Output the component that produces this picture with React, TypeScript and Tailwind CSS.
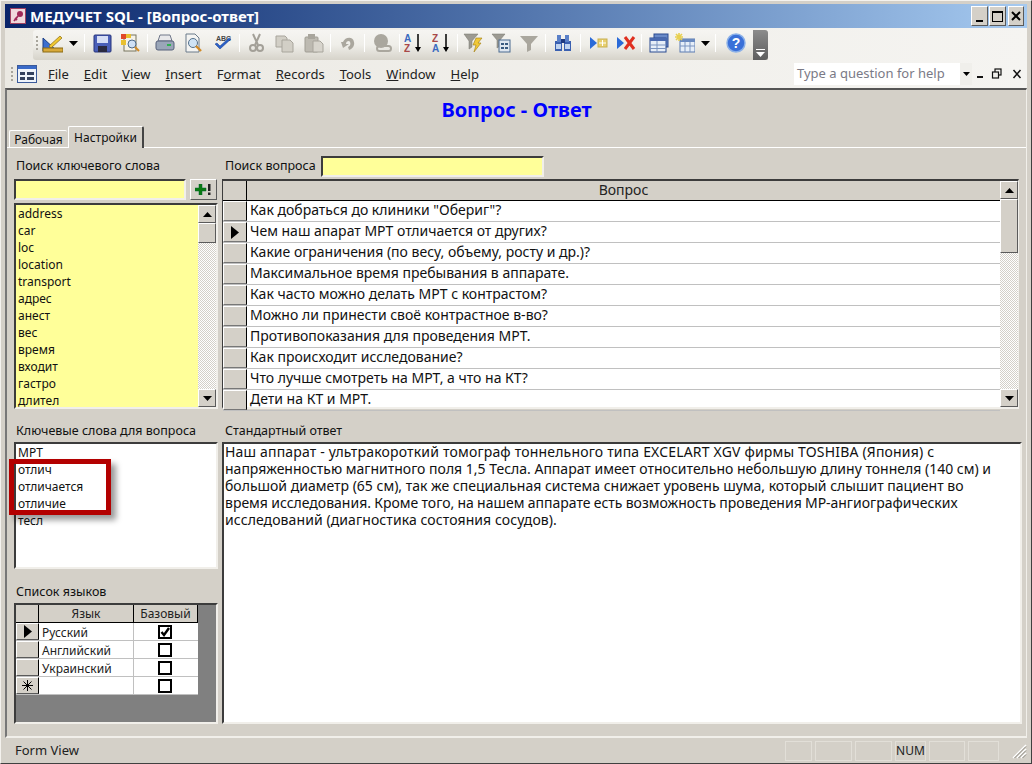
import React from "react";

const sunken = "border-2 border-t-[#3c3c3c] border-l-[#3c3c3c] border-b-[#f1efea] border-r-[#f1efea]";
const raised = "border border-t-[#ffffff] border-l-[#ffffff] border-b-[#5a5a5a] border-r-[#5a5a5a] bg-[#d4d0c8]";

const I = ({ children, w = 20, cls = "" }: { children: React.ReactNode; w?: number; cls?: string }) => (
  <svg width={w} height={20} viewBox={`0 0 ${w} 20`} className={`shrink-0 ${cls}`}>{children}</svg>
);

const Sep = ({ cls }: { cls: string }) => <div className={`w-px h-[18px] bg-[#b8b5ac] border-r border-white shrink-0 ${cls}`} />;
const Arrow = ({ cls = "" }: { cls?: string }) => (
  <svg width={9} height={5} viewBox="0 0 9 5" className={`shrink-0 ${cls}`}><path d="M0 0h9L4.5 5z" fill="#000" /></svg>
);
const Grip = ({ h = 4 }: { h?: number }) => (
  <div className="flex flex-col gap-[2px] w-[3px] shrink-0">
    {Array.from({ length: h }).map((_, i) => <div key={i} className="w-[2px] h-[2px] bg-[#a8a59c]" />)}
  </div>
);

function Toolbar() {
  return (
    <div className="h-[32px] shrink-0 flex items-end bg-gradient-to-r from-[#ebe9e3] to-[#f5f4f1]">
      <div className="ml-[28px] w-[735px] h-[30px] pb-[4px] rounded-l-[3px] flex items-center bg-gradient-to-b from-[#f6f5f2] via-[#efeee9] to-[#d6d3ca] relative">
        <div className="ml-[3px]"><Grip /></div>
        <I w={21} cls="ml-[3px]">
          <path d="M1 18V5l14 13z" fill="#3c6fd0" stroke="#1c3f86" />
          <rect x="1" y="15" width="20" height="4" fill="#d8a93a" stroke="#8a6a14" />
          <path d="M7 13 18 3l2 2L9 15z" fill="#f0c830" stroke="#8a6a14" strokeWidth=".7" />
        </I>
        <Arrow cls="ml-[6px]" />
        <Sep cls="ml-[6px]" />
        <I w={19} cls="ml-[8px]">
          <rect x="1" y="2" width="17" height="17" rx="1" fill="#4a5fb8" stroke="#26357c" />
          <rect x="4" y="3" width="11" height="7" fill="#d6def5" />
          <rect x="5" y="13" width="9" height="6" fill="#2a2a40" />
        </I>
        <I w={21} cls="ml-[8px]">
          <rect x="4" y="2" width="12" height="16" fill="#f5f2e8" stroke="#77755e" />
          <rect x="1" y="1" width="5" height="5" fill="#e04828" /><rect x="6" y="1" width="5" height="4" fill="#e8c030" />
          <rect x="1" y="7" width="5" height="5" fill="#e8c030" />
          <circle cx="12" cy="11" r="4" fill="#cfe0f5" stroke="#4d6a8a" />
          <path d="m15 14 4 4" stroke="#d08a28" strokeWidth="2" />
        </I>
        <Sep cls="ml-[6px]" />
        <I cls="ml-[7px]">
          <path d="M5 2h10l2 6H3z" fill="#e8e8ea" stroke="#70788a" />
          <rect x="1" y="8" width="18" height="9" rx="2" fill="#9aa6b8" stroke="#56607a" />
          <rect x="12" y="11" width="4" height="2" fill="#30b050" />
        </I>
        <I cls="ml-[9px]">
          <path d="M2 1h9l4 4v14H2z" fill="#f4f4f2" stroke="#6a7a8a" />
          <circle cx="9" cy="10" r="4.5" fill="#cfe3f5" stroke="#55708a" />
          <path d="m12 13 5 5" stroke="#d08a28" strokeWidth="2.4" />
        </I>
        <I cls="ml-[9px]">
          <text x="3" y="8" fontSize="7" fontWeight="700" fontFamily="Liberation Sans" fill="#444">ABC</text>
          <path d="m2 11 5 5 11-10-2-1-9 8-3-3z" fill="#2a60c8" stroke="#1a3c8a" strokeWidth=".5" />
        </I>
        <Sep cls="ml-[6px]" />
        <I w={15} cls="ml-[9px]">
          <path d="m4 1 5 11M11 1 6 12" stroke="#a3a098" strokeWidth="2" />
          <circle cx="4" cy="15" r="3" fill="none" stroke="#a3a098" strokeWidth="2" />
          <circle cx="11" cy="15" r="3" fill="none" stroke="#a3a098" strokeWidth="2" />
        </I>
        <I cls="ml-[11px]">
          <path d="M1 3h9l2 2v9H1z" fill="#d2cfc6" stroke="#a8a59c" />
          <path d="M7 7h8l3 3v9H7z" fill="#d2cfc6" stroke="#a8a59c" />
        </I>
        <I cls="ml-[9px]">
          <rect x="1" y="4" width="13" height="15" rx="1" fill="#bdbab1" stroke="#a09d94" />
          <rect x="4" y="1" width="7" height="5" fill="#a8a59c" />
          <path d="M9 8h7l3 3v8H9z" fill="#d8d5cd" stroke="#a8a59c" />
        </I>
        <Sep cls="ml-[6px]" />
        <I w={16} cls="ml-[9px]">
          <path d="M3 9c2-5 10-6 11 0 1 4-2 7-5 8l-1-3c3-1 3-5 1-6-2 0-3 1-3 3l3 0-6 4-2-6z" fill="#aaa79e" />
        </I>
        <Sep cls="ml-[8px]" />
        <I cls="ml-[7px]">
          <circle cx="9" cy="8" r="7" fill="#aaa79e" />
          <rect x="5" y="13" width="14" height="5" rx="2.5" fill="none" stroke="#aaa79e" strokeWidth="2" />
        </I>
        <Sep cls="ml-[7px]" />
        <I cls="ml-[4px]">
          <text x="0" y="9" fontSize="10" fontWeight="700" fontFamily="Liberation Sans" fill="#3a6ac0">A</text>
          <text x="0" y="19" fontSize="10" fontWeight="700" fontFamily="Liberation Sans" fill="#a84848">Z</text>
          <path d="M14 1v15" stroke="#000" strokeWidth="1.5" /><path d="m11 14 3 5 3-5z" fill="#000" />
        </I>
        <I cls="ml-[8px]">
          <text x="0" y="9" fontSize="10" fontWeight="700" fontFamily="Liberation Sans" fill="#a84848">Z</text>
          <text x="0" y="19" fontSize="10" fontWeight="700" fontFamily="Liberation Sans" fill="#3a6ac0">A</text>
          <path d="M14 1v15" stroke="#000" strokeWidth="1.5" /><path d="m11 14 3 5 3-5z" fill="#000" />
        </I>
        <Sep cls="ml-[5px]" />
        <I cls="ml-[5px]">
          <path d="M1 1h14L9 8v6l-3 2V8z" fill="#9c9a92" stroke="#77756d" strokeWidth=".5" />
          <path d="m13 5 6 0-4 5h3l-7 9 2-7h-3z" fill="#f0c838" stroke="#a07c10" strokeWidth=".6" />
        </I>
        <I cls="ml-[8px]">
          <path d="M1 1h13L9 7v6l-3 2V7z" fill="#9c9a92" stroke="#77756d" strokeWidth=".5" />
          <rect x="8" y="7" width="11" height="12" fill="#dfe6ef" stroke="#4a6a90" />
          <rect x="10" y="10" width="3" height="2" fill="#3a5a80" /><rect x="14" y="10" width="3" height="2" fill="#3a5a80" />
          <rect x="10" y="14" width="3" height="2" fill="#3a5a80" /><rect x="14" y="14" width="3" height="2" fill="#3a5a80" />
        </I>
        <I cls="ml-[8px]">
          <path d="M1 3h18l-7 8v6l-4 2v-8z" fill="#aaa79e" />
        </I>
        <Sep cls="ml-[6px]" />
        <I cls="ml-[7px]">
          <rect x="2" y="8" width="7" height="10" fill="#3a60b0" /><rect x="11" y="8" width="7" height="10" fill="#3a60b0" />
          <rect x="4" y="2" width="4" height="7" fill="#5a80c8" /><rect x="12" y="2" width="4" height="7" fill="#5a80c8" />
          <rect x="8" y="6" width="4" height="4" fill="#1f3a80" />
          <rect x="3" y="11" width="5" height="5" fill="#c0d4f0" /><rect x="12" y="11" width="5" height="5" fill="#c0d4f0" />
        </I>
        <Sep cls="ml-[7px]" />
        <I cls="ml-[8px]">
          <path d="M1 4v12l7-6z" fill="#2a6ad8" />
          <rect x="9" y="6" width="9" height="8" fill="#e8d070" stroke="#c8b050" />
          <path d="M13.500 7v6M10 10h7" stroke="#fff" />
        </I>
        <I cls="ml-[7px]">
          <path d="M1 4v12l7-6z" fill="#2a6ad8" />
          <path d="m9 4 9 12M18 4 9 16" stroke="#e03020" strokeWidth="3" />
        </I>
        <Sep cls="ml-[5px]" />
        <I cls="ml-[7px]">
          <rect x="5" y="1" width="14" height="13" fill="#6a8ac8" stroke="#2a4a90" />
          <rect x="1" y="5" width="16" height="14" fill="#e6eef8" stroke="#2a4a90" />
          <rect x="1" y="5" width="16" height="3" fill="#4a6ab0" />
          <path d="M8 8v11M1 12h16M1 15.500h16" stroke="#7a94c0" />
        </I>
        <I cls="ml-[6px]">
          <rect x="5" y="6" width="15" height="13" fill="#e6eef8" stroke="#5a7ab0" />
          <rect x="5" y="6" width="15" height="3" fill="#6a8ac0" />
          <path d="M10 9v10M15 9v10M5 13h15" stroke="#7a94c0" />
          <path d="M4 0v8M0 4h8M1 1l6 6M7 1 1 7" stroke="#e8d050" strokeWidth="1.6" />
        </I>
        <Arrow cls="ml-[6px]" />
        <Sep cls="ml-[5px]" />
        <I cls="ml-[10px]">
          <circle cx="10" cy="10" r="9" fill="#3a70d8" stroke="#8ab0e8" strokeWidth="1.5" />
          <text x="10" y="15" textAnchor="middle" fontSize="14" fontWeight="700" fontFamily="Liberation Sans" fill="#fff">?</text>
        </I>
        <div className="absolute right-0 top-0 w-[15px] h-[30px] rounded-r-[3px] bg-gradient-to-b from-[#8c8c8c] to-[#5e5e5e] flex flex-col items-center justify-end pb-[3px]">
          <div className="w-[9px] h-px bg-white mb-[2px]" />
          <svg width={9} height={5} viewBox="0 0 9 5"><path d="M0 0h9L4.500 5z" fill="#fff" /></svg>
        </div>
      </div>
    </div>
  );
}

function MenuBar() {
  const items: [string, string, string][] = [
    ["", "F", "ile"], ["", "E", "dit"], ["", "V", "iew"], ["", "I", "nsert"],
    ["F", "o", "rmat"], ["", "R", "ecords"], ["", "T", "ools"], ["", "W", "indow"], ["", "H", "elp"],
  ];
  return (
    <div className="h-[28px] shrink-0 flex items-center bg-gradient-to-r from-[#ebe9e3] to-[#f5f4f1] text-[13px] text-[#222] font-['Noto_Sans','Liberation_Sans',sans-serif]">
      <div className="ml-[6px]"><Grip /></div>
      <svg width={20} height={18} viewBox="0 0 20 18" className="ml-[3px] shrink-0">
        <rect x=".5" y=".5" width="19" height="17" fill="#eef3fa" stroke="#3a5a9a" />
        <rect x="1" y="1" width="18" height="3" fill="#3a6ac8" />
        <rect x="3" y="7" width="5" height="3" fill="#33415e" /><rect x="10" y="7" width="7" height="3" fill="#33415e" />
        <rect x="3" y="12" width="5" height="3" fill="#33415e" /><rect x="10" y="12" width="7" height="3" fill="#33415e" />
      </svg>
      <div className="flex ml-[11px] gap-[15px] leading-[18px]">
        {items.map(([a, u, b], i) => (
          <span key={i}>{a}<span className="underline">{u}</span>{b}</span>
        ))}
      </div>
      <div className="ml-auto flex items-center">
        <div className="w-[166px] h-[22px] bg-white text-[#7a7a86] flex items-center pl-[3px] pb-[1px] whitespace-nowrap">Type a question for help</div>
        <div className="w-[12px] h-[22px] bg-[#f0efeb] flex items-center justify-center"><svg width={7} height={4} viewBox="0 0 7 4"><path d="M0 0h7L3.500 4z" fill="#000" /></svg></div>
        <svg width={55} height={14} viewBox="0 0 55 14" className="shrink-0">
          <rect x="5" y="9" width="6" height="2" fill="#111" />
          <rect x="23" y="2" width="6" height="6" fill="none" stroke="#111" strokeWidth="1.200" />
          <rect x="20.500" y="5" width="6" height="6" fill="#f0efeb" stroke="#111" strokeWidth="1.200" />
          <path d="m41.500 3 7 8M48.500 3l-7 8" stroke="#111" strokeWidth="1.500" />
        </svg>
      </div>
    </div>
  );
}

const Label = ({ children, cls = "" }: { children: React.ReactNode; cls?: string }) => (
  <div className={`text-[12.500px] leading-[16px] text-[#111] whitespace-nowrap font-['Noto_Sans','Liberation_Sans',sans-serif] ${cls}`}>{children}</div>
);

const Checker = "bg-[repeating-conic-gradient(#d4d0c8_0%_25%,#ffffff_0%_50%)] bg-[length:2px_2px]";

const ScrollBtn = ({ up }: { up?: boolean }) => (
  <div className={`${raised} h-[18px] flex items-center justify-center shrink-0`}>
    <svg width={9} height={5} viewBox="0 0 9 5"><path d={up ? "M0 5h9L4.500 0z" : "M0 0h9L4.500 5z"} fill="#000" /></svg>
  </div>
);

const Scrollbar = ({ thumb }: { thumb: number }) => (
  <div className={`w-[18px] h-full flex flex-col shrink-0 ${Checker}`}>
    <ScrollBtn up />
    <div className={raised} style={{ height: thumb }} />
    <div className="flex-1" />
    <ScrollBtn />
  </div>
);

const Pointer = () => (
  <svg width={8} height={13} viewBox="0 0 8 13"><path d="M0 0l8 6.500L0 13z" fill="#000" /></svg>
);

const keywords = ["address", "car", "loc", "location", "transport", "адрес", "анест", "вес", "время", "входит", "гастро", "длител"];
const questions = [
  'Как добраться до клиники "Обериг"?',
  "Чем наш апарат МРТ отличается от других?",
  "Какие ограничения (по весу, объему, росту и др.)?",
  "Максимальное время пребывания в аппарате.",
  "Как часто можно делать МРТ с контрастом?",
  "Можно ли принести своё контрастное в-во?",
  "Противопоказания для проведения МРТ.",
  "Как происходит исследование?",
  "Что лучше смотреть на МРТ, а что на КТ?",
  "Дети на КТ и МРТ.",
];
const related = ["МРТ", "отлич", "отличается", "отличие", "тесл"];
const langs: [string, boolean, boolean][] = [["Русский", true, true], ["Английский", false, false], ["Украинский", false, false], ["", false, false]];

function Check({ on }: { on: boolean }) {
  return (
    <div className="w-[14px] h-[14px] border-2 border-black bg-white flex items-center justify-center">
      {on && <svg width={10} height={10} viewBox="0 0 10 10"><path d="M1.500 5l2.500 3 5-7" stroke="#000" strokeWidth="2.400" fill="none" /></svg>}
    </div>
  );
}

export default function App() {
  return (
    <div className="w-[1032px] h-[764px] bg-[#d4d0c8] flex flex-col overflow-hidden px-[4px] pt-[3px] pb-[1px] border-t border-l border-r border-b border-t-[#f4f2ee] border-l-[#f4f2ee] border-r-[#404040] border-b-[#404040] font-['Liberation_Sans',sans-serif] relative">
      <div className="h-[24px] shrink-0 flex items-center bg-gradient-to-r from-[#0a246a] to-[#a6caf0]">
        <svg width={16} height={16} viewBox="0 0 16 16" className="ml-[5px] shrink-0">
          <rect x=".5" y=".5" width="15" height="15" fill="#f0d8dc" stroke="#a04060" />
          <circle cx="10" cy="6" r="3" fill="#a02858" /><path d="m8 8-4 5M5 10l2 2" stroke="#a02858" strokeWidth="1.800" />
        </svg>
        <div className="ml-[4px] text-white font-bold text-[15px] leading-[18px] font-['DejaVu_Sans',sans-serif] whitespace-nowrap">МЕДУЧЕТ SQL - [Вопрос-ответ]</div>
        <div className="ml-auto mr-[3px] flex gap-[1px]">
          {[0, 1].map(k => (
            <div key={k} className={`${raised} w-[17px] h-[20px] flex items-center justify-center`}>
              {k === 0 ? <div className="w-[7px] h-[2px] bg-black mt-[9px]" /> : <div className="w-[11px] h-[11px] border border-black border-t-2" />}
            </div>
          ))}
          <div className={`${raised} w-[16px] h-[20px] ml-[1px] flex items-center justify-center`}>
            <svg width={10} height={10} viewBox="0 0 10 10"><path d="m1 1 8 8M9 1 1 9" stroke="#000" strokeWidth="2" /></svg>
          </div>
        </div>
      </div>
      <Toolbar />
      <MenuBar />
      <div className="flex-1 min-h-0 flex flex-col border-t-2 border-l-2 border-t-[#555] border-l-[#777] border-b-2 border-b-[#f1efea] border-r border-r-[#f1efea] relative">
        <div className="h-[37px] pt-[2px] shrink-0 flex items-center justify-center text-[#0000ff] font-bold text-[20px]">Вопрос - Ответ</div>
        <div className="h-[21px] shrink-0 flex items-end pl-[2px] border-b border-white relative font-['Noto_Sans','Liberation_Sans',sans-serif] text-[12px] text-[#111]">
          <div className="h-[18px] w-[58px] flex items-center justify-center border-t border-l border-white rounded-t-[2px] mb-[-1px] leading-none">Рабочая</div>
          <div className="h-[22px] w-[76px] ml-[1px] flex items-center justify-center border-t border-l border-white border-r-2 border-r-[#444] rounded-t-[2px] bg-[#d4d0c8] mb-[-1px] leading-none">Настройки</div>
        </div>
        <div className="flex-1 min-h-0 grid grid-cols-[204px_1fr] gap-x-[4px] pl-[7px] pr-[4px] pt-[6px] pb-[12px]">
          <div className="flex flex-col min-h-0">
            <Label cls="h-[25px] pl-[2px] pt-[4px]">Поиск ключевого слова</Label>
            <div className="h-[21px] flex shrink-0">
              <div className={`w-[172px] ${sunken} bg-[#ffff99]`} />
              <div className={`${raised} w-[27px] h-[21px] ml-[4px] flex items-center justify-center gap-[1px]`}>
                <svg width={17} height={11} viewBox="0 0 17 11">
                  <path d="M4 0h3v4h4v3H7v4H4V7H0V4h4z" fill="#0a7a10" stroke="#063" strokeWidth=".5" />
                  <rect x="13" y="0" width="2.500" height="7" fill="#222" /><rect x="13" y="8.500" width="2.500" height="2.500" fill="#222" />
                </svg>
              </div>
            </div>
            <div className={`h-[206px] mt-[3px] shrink-0 flex ${sunken} bg-[#ffff99]`}>
              <div className="flex-1 pl-[2px] text-[12px] leading-[17px] text-[#111]">
                {keywords.map(k => <div key={k} className="h-[17px]">{k}</div>)}
              </div>
              <Scrollbar thumb={20} />
            </div>
            <Label cls="h-[33px] pl-[2px] pt-[14px]">Ключевые слова для вопроса</Label>
            <div className={`h-[127px] shrink-0 ${sunken} bg-white pl-[2px] text-[12px] leading-[17px] text-[#111]`}>
              {related.map(k => <div key={k} className="h-[17px]">{k}</div>)}
            </div>
            <Label cls="h-[34px] pl-[2px] pt-[15px]">Список языков</Label>
            <div className={`flex-1 min-h-0 ${sunken} bg-[#808080]`}>
              <div className="w-[182px] text-[12px] text-[#222]">
                <div className="flex h-[18px] bg-[#d4d0c8] border-b border-black">
                  <div className="w-[23px] border-r border-black" />
                  <div className="w-[95px] border-r border-black text-center leading-[17px]">Язык</div>
                  <div className="flex-1 border-r border-black text-center leading-[17px]">Базовый</div>
                </div>
                {langs.map(([n, on, sel], i) => (
                  <div key={i} className="flex h-[18px] bg-white border-b border-b-[#c0c0c0]">
                    <div className={`w-[23px] ${raised} !border-r-black flex items-center justify-center`}>
                      {sel && <Pointer />}
                      {i === 3 && (
                        <svg width={11} height={11} viewBox="0 0 11 11"><path d="M5.500 0v11M0 5.500h11M1.500 1.500l8 8M9.500 1.500l-8 8" stroke="#000" strokeWidth="1" /></svg>
                      )}
                    </div>
                    <div className="w-[95px] border-r border-[#c0c0c0] pl-[3px] leading-[19px]">{n}</div>
                    <div className="flex-1 flex items-center justify-center pr-[2px]"><Check on={on} /></div>
                  </div>
                ))}
              </div>
            </div>
          </div>
          <div className="flex flex-col min-h-0">
            <div className="h-[25px] flex items-start shrink-0">
              <Label cls="pl-[3px] pt-[4px] w-[99px]">Поиск вопроса</Label>
              <div className={`w-[223px] h-[21px] mt-[2px] ${sunken} bg-[#ffff99]`} />
            </div>
            <div className="h-[230px] mr-[3px] shrink-0 flex border-t-2 border-l border-t-[#3c3c3c] border-l-[#3c3c3c] border-b-2 border-b-[#f1efea] border-r border-r-[#f1efea] bg-white">
              <div className="flex-1 min-w-0 flex flex-col">
                <div className="h-[20px] flex bg-[#d4d0c8] border-b border-black shrink-0">
                  <div className="w-[24px] border-r border-black" />
                  <div className="flex-1 text-center text-[14px] leading-[18px] text-[#222]">Вопрос</div>
                </div>
                {questions.map((q, i) => (
                  <div key={i} className="h-[21px] flex shrink-0 border-b border-b-[#c0c0c0]">
                    <div className={`w-[24px] ${raised} !border-r-black !border-b-[#777] flex items-center justify-center`}>
                      {i === 1 && <Pointer />}
                    </div>
                    <div className="flex-1 pl-[3px] text-[14px] leading-[18px] text-[#111] whitespace-nowrap">{q}</div>
                  </div>
                ))}
              </div>
              <Scrollbar thumb={54} />
            </div>
            <Label cls="h-[33px] pl-[3px] pt-[14px]">Стандартный ответ</Label>
            <div className={`flex-1 min-h-0 ${sunken} bg-white pl-[1px] text-[14px] leading-[17px] text-[#111] whitespace-nowrap`}>
              <div className="mt-[-1px] tracking-[0.18px]">Наш аппарат - ультракороткий томограф тоннельного типа EXCELART XGV фирмы TOSHIBA (Япония) с</div>
              <div>напряженностью магнитного поля 1,5 Тесла. Аппарат имеет относительно небольшую длину тоннеля (140 см) и</div>
              <div>большой диаметр (65 см), так же специальная система снижает уровень шума, который слышит пациент во</div>
              <div className="[word-spacing:-0.4px]">время исследования. Кроме того, на нашем аппарате есть возможность проведения МР-ангиографических</div>
              <div className="tracking-[0.09px]">исследований (диагностика состояния сосудов).</div>
            </div>
          </div>
        </div>
      </div>
      <div className="h-[23px] shrink-0 flex items-center mt-[1px] text-[13px] text-[#222] font-['Noto_Sans','Liberation_Sans',sans-serif] relative">
        <div className="ml-[10px] flex-1">Form View</div>
        {[[27, ""], [37, ""], [37, ""], [31, "NUM"], [36, ""], [31, ""]].map(([w, t], i) => (
          <div key={i} style={{ width: Number(w) }} className="h-[20px] mr-[3px] border border-[#e2dfd8] text-[12px] flex items-center justify-center text-[#222]">{t}</div>
        ))}
        <svg width={16} height={16} viewBox="0 0 16 16" className="ml-[9px] shrink-0">
          <path d="M15 2 2 15M15 6 6 15M15 10l-5 5" stroke="#fff" strokeWidth="1.500" />
          <path d="M15 3.500 3.500 15M15 7.500 7.500 15M15 11.500 11.500 15" stroke="#8a877e" />
        </svg>
      </div>
      <div className="absolute left-[8px] top-[458px] w-[102px] h-[56px] border-[5px] border-[#b30000] shadow-[5px_5px_6px_rgba(0,0,0,0.4)] pointer-events-none" />
    </div>
  );
}
